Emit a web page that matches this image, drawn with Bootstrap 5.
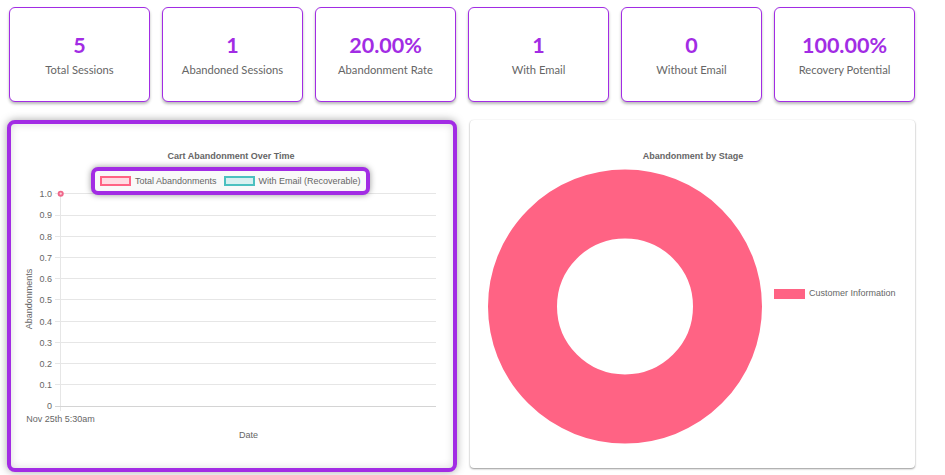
<!DOCTYPE html>
<html lang="en">
<head>
<meta charset="utf-8">
<title>Cart Abandonment</title>
<link href="https://cdn.jsdelivr.net/npm/bootstrap@5.3.0/dist/css/bootstrap.min.css" rel="stylesheet">
<style>
html,body{background:#fff;overflow:hidden}
.page-wrap{width:945px;height:475px;padding:7px 30px 0 7px}
.stat-row{margin-left:2px;gap:12px}
.stat-card{flex:0 0 141px;height:95px;border:1.5px solid #a22ce4;border-radius:6px;box-shadow:0 2px 3px rgba(0,0,0,.28);font-family:"Lato","Open Sans",sans-serif}
.stat-value{font-size:21.5px;font-weight:700;line-height:28px;color:#a22ce4;margin-top:23px}
.stat-label{font-size:11.2px;line-height:16px;color:#666;margin-top:3px}
.chart-row{margin-top:18px;gap:13px}
.chart-hl{flex:0 0 450px;height:352px;border:4px solid #a22ce4;border-radius:8px;box-shadow:0 0 8px rgba(0,0,0,.35),inset 0 0 8px rgba(0,0,0,.14);background:#fff}
.chart-plain{flex:0 0 445px;height:348px;border:0;border-radius:4px;box-shadow:0 1px 2px rgba(0,0,0,.4),0 0 1px rgba(0,0,0,.12);background:#fff}
.legend-hl{left:80px;top:43px;width:279px;height:28px;border:4px solid #a22ce4;border-radius:7px;box-shadow:0 0 6px rgba(0,0,0,.4);background:#f9f9f9;font:9px/1 "Liberation Sans",sans-serif;color:#666;padding-left:5px;gap:4px;white-space:nowrap}
.swatch-a,.swatch-b{flex:0 0 31px;height:10px;border:2px solid #ff6384;background:#ffdce3}
.swatch-b{border-color:#4bc0c0;background:#d8f0f0;margin-left:3px}
svg text{font-family:"Liberation Sans",sans-serif;font-size:9px;fill:#666}
svg .ttl{font-weight:700}
</style>
</head>
<body class="m-0">
<div class="page-wrap">
  <div class="d-flex stat-row">
    <div class="card stat-card text-center"><div class="stat-value">5</div><div class="stat-label">Total Sessions</div></div>
    <div class="card stat-card text-center"><div class="stat-value">1</div><div class="stat-label">Abandoned Sessions</div></div>
    <div class="card stat-card text-center"><div class="stat-value">20.00%</div><div class="stat-label">Abandonment Rate</div></div>
    <div class="card stat-card text-center"><div class="stat-value">1</div><div class="stat-label">With Email</div></div>
    <div class="card stat-card text-center"><div class="stat-value">0</div><div class="stat-label">Without Email</div></div>
    <div class="card stat-card text-center"><div class="stat-value">100.00%</div><div class="stat-label">Recovery Potential</div></div>
  </div>
  <div class="d-flex chart-row">
    <div class="chart-hl position-relative">
      <svg width="442" height="344" viewBox="11 124 442 344" class="d-block">
        <text class="ttl" x="231" y="159" text-anchor="middle">Cart Abandonment Over Time</text>
        <g stroke="#e6e6e6" stroke-width="1">
          <line x1="55" x2="436" y1="193.5" y2="193.5"/><line x1="55" x2="436" y1="215.5" y2="215.5"/>
          <line x1="55" x2="436" y1="236.5" y2="236.5"/><line x1="55" x2="436" y1="257.5" y2="257.5"/>
          <line x1="55" x2="436" y1="278.5" y2="278.5"/><line x1="55" x2="436" y1="299.5" y2="299.5"/>
          <line x1="55" x2="436" y1="321.5" y2="321.5"/><line x1="55" x2="436" y1="342.5" y2="342.5"/>
          <line x1="55" x2="436" y1="363.5" y2="363.5"/><line x1="55" x2="436" y1="384.5" y2="384.5"/>
          <line x1="60.5" x2="60.5" y1="193" y2="411"/>
        </g>
        <line x1="55" x2="436" y1="406.5" y2="406.5" stroke="#d4d4d4"/>
        <g text-anchor="end">
          <text x="52" y="196.5">1.0</text><text x="52" y="218">0.9</text><text x="52" y="239.5">0.8</text>
          <text x="52" y="260.5">0.7</text><text x="52" y="281.5">0.6</text><text x="52" y="302.5">0.5</text>
          <text x="52" y="324.5">0.4</text><text x="52" y="345.5">0.3</text><text x="52" y="366.5">0.2</text>
          <text x="52" y="387.5">0.1</text><text x="52" y="408.5">0</text>
        </g>
        <circle cx="60.7" cy="193.7" r="2.1" fill="#fbd3dc" stroke="#f0678a" stroke-width="1.9"/>
        <text transform="translate(32 299) rotate(-90)" text-anchor="middle">Abandonments</text>
        <text x="60.5" y="421.5" text-anchor="middle">Nov 25th 5:30am</text>
        <text x="248.5" y="438" text-anchor="middle">Date</text>
      </svg>
      <div class="legend-hl position-absolute d-flex align-items-center">
        <span class="swatch-a"></span><span>Total Abandonments</span>
        <span class="swatch-b"></span><span>With Email (Recoverable)</span>
      </div>
    </div>
    <div class="card chart-plain">
      <svg width="445" height="348" viewBox="470 120 445 348" class="d-block">
        <text class="ttl" x="693" y="159" text-anchor="middle">Abandonment by Stage</text>
        <circle cx="625" cy="306.5" r="102.5" fill="none" stroke="#ff6384" stroke-width="69"/>
        <rect x="774" y="289" width="31" height="10" fill="#ff6384"/>
        <text x="809" y="295.5">Customer Information</text>
      </svg>
    </div>
  </div>
</div>
<script src="https://cdn.jsdelivr.net/npm/bootstrap@5.3.0/dist/js/bootstrap.bundle.min.js"></script>
</body>
</html>
